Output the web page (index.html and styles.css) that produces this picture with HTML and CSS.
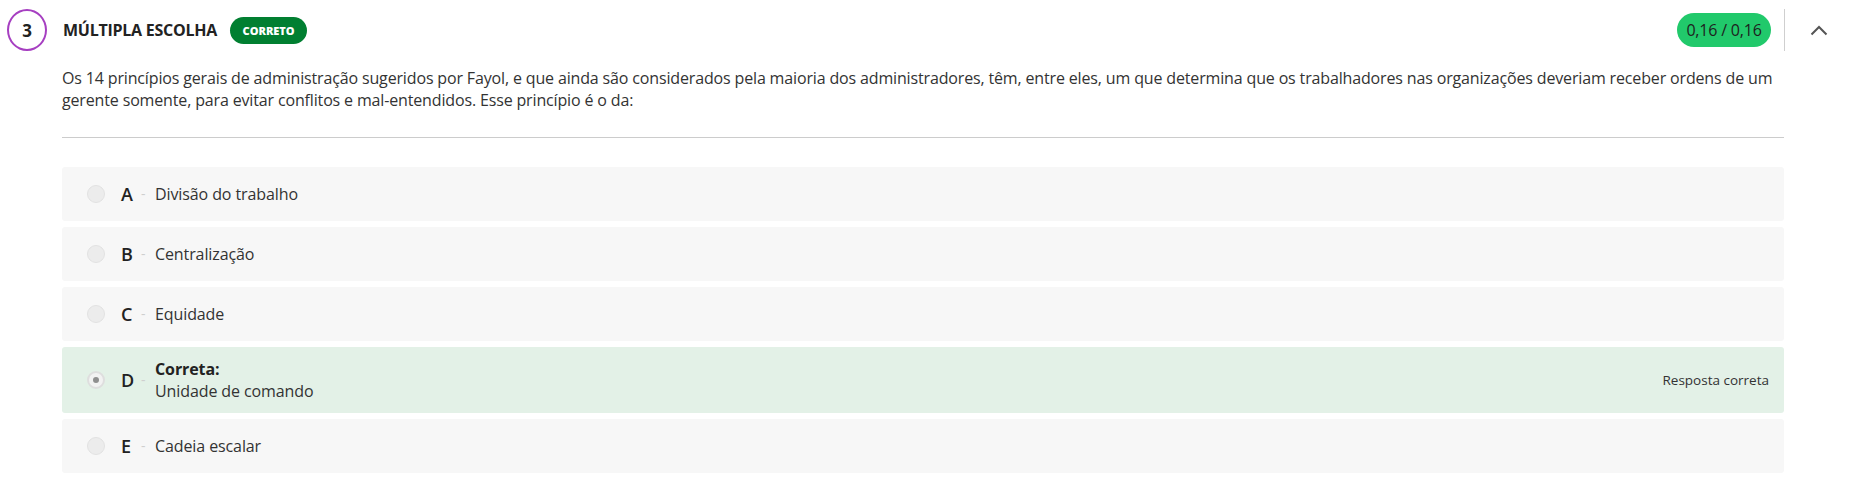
FILE: index.html
```html
<!DOCTYPE html>
<html lang="pt-BR">
<head>
<meta charset="utf-8">
<title>Questão 3</title>
<link rel="stylesheet" href="styles.css">
</head>
<body>
<div class="question">
  <div class="q-top">
    <div class="q-num">3</div>
    <div class="q-title">MÚLTIPLA ESCOLHA</div>
    <span class="badge">CORRETO</span>
    <div class="spacer"></div>
    <div class="score">0,16 / 0,16</div>
    <div class="divider"></div>
    <button class="toggle" aria-label="Recolher">
      <svg width="18" height="11" viewBox="0 0 18 11"><path d="M1.5 9.5 L9 2 L16.5 9.5" fill="none" stroke="#555" stroke-width="2"/></svg>
    </button>
  </div>
  <div class="q-body">
    <p class="q-text">Os 14 princípios gerais de administração sugeridos por Fayol, e que ainda são considerados pela maioria dos administradores, têm, entre eles, um que determina que os trabalhadores nas organizações deveriam receber ordens de um gerente somente, para evitar conflitos e mal-entendidos. Esse princípio é o da:</p>
    <hr class="sep">
    <ul class="options">
      <li class="option">
        <span class="radio"></span><span class="letter">A</span><span class="dash">-</span>
        <div class="opt-text">Divisão do trabalho</div>
      </li>
      <li class="option">
        <span class="radio"></span><span class="letter">B</span><span class="dash">-</span>
        <div class="opt-text">Centralização</div>
      </li>
      <li class="option">
        <span class="radio"></span><span class="letter">C</span><span class="dash">-</span>
        <div class="opt-text">Equidade</div>
      </li>
      <li class="option correct">
        <span class="radio checked"></span><span class="letter">D</span><span class="dash">-</span>
        <div class="opt-text"><strong>Correta:</strong><br>Unidade de comando</div>
        <span class="feedback">Resposta correta</span>
      </li>
      <li class="option">
        <span class="radio"></span><span class="letter">E</span><span class="dash">-</span>
        <div class="opt-text">Cadeia escalar</div>
      </li>
    </ul>
  </div>
</div>
</body>
</html>
```

FILE: styles.css
```css
* { box-sizing: border-box; }
html, body { margin: 0; padding: 0; background: #fff; }
body {
  font-family: "Open Sans", "Noto Sans", sans-serif;
  color: #333;
  font-size: 16px;
}
.question { width: 1852px; }
.q-top {
  display: flex;
  align-items: center;
  height: 42px;
  margin-top: 9px;
}
.q-num {
  margin-left: 7px;
  width: 40px;
  height: 42px;
  border: 2px solid #a63fc1;
  border-radius: 50%;
  display: flex;
  align-items: center;
  justify-content: center;
  font-weight: 700;
  font-size: 17px;
  color: #222;
}
.q-title {
  margin-left: 16px;
  font-weight: 700;
  font-size: 16px;
  letter-spacing: -0.25px;
  color: #222;
}
.badge {
  margin-left: 13px;
  height: 27px;
  width: 77px;
  border-radius: 14px;
  background: #017f31;
  color: #fff;
  font-size: 11px;
  font-weight: 800;
  display: flex;
  align-items: center;
  justify-content: center;
}
.spacer { flex: 1; }
.score {
  height: 34px;
  width: 94px;
  border-radius: 17px;
  background: #21c96b;
  color: #1e1e1e;
  font-size: 16px;
  letter-spacing: -0.2px;
  display: flex;
  align-items: center;
  justify-content: center;
  margin-right: 13px;
}
.divider { width: 1px; height: 42px; background: #cfcfcf; }
.toggle {
  width: 67px;
  height: 42px;
  border: 0;
  background: transparent;
  padding: 0;
  display: flex;
  align-items: center;
  justify-content: center;
}
.q-body { margin: 0 68px 0 62px; }
.q-text {
  margin: 16px 0 0;
  line-height: 22px;
  font-size: 16px;
  letter-spacing: -0.15px;
  color: #333;
}
.sep {
  margin: 26px 0 0;
  border: 0;
  border-top: 1px solid #cccccc;
}
.options {
  list-style: none;
  margin: 29px 0 0;
  padding: 0;
}
.option {
  display: flex;
  align-items: center;
  min-height: 54px;
  padding: 11px 15px 11px 25px;
  background: #f7f7f7;
  border-radius: 3px;
  margin-bottom: 6px;
  line-height: 22px;
}
.option.correct { background: #e3f1e7; }
.radio {
  width: 18px;
  height: 18px;
  border-radius: 50%;
  background: #ececec;
  border: 1px solid #e2e2e2;
  flex: none;
  display: flex;
  align-items: center;
  justify-content: center;
}
.radio.checked::after {
  content: "";
  width: 6px;
  height: 6px;
  border-radius: 50%;
  background: #8f8f8f;
}
.radio.checked { background: #f2f2f2; border: 2px solid #dedede; }
.letter {
  margin-left: 16px;
  width: 20px;
  font-size: 18px;
  font-weight: 600;
  color: #222;
}
.dash {
  width: 14px;
  color: #cfcfcf;
  font-size: 14px;
}
.opt-text { flex: 1; color: #333; letter-spacing: -0.1px; }
.opt-text strong { color: #222; font-weight: 700; }
.feedback { font-size: 13.5px; color: #333; }
```
